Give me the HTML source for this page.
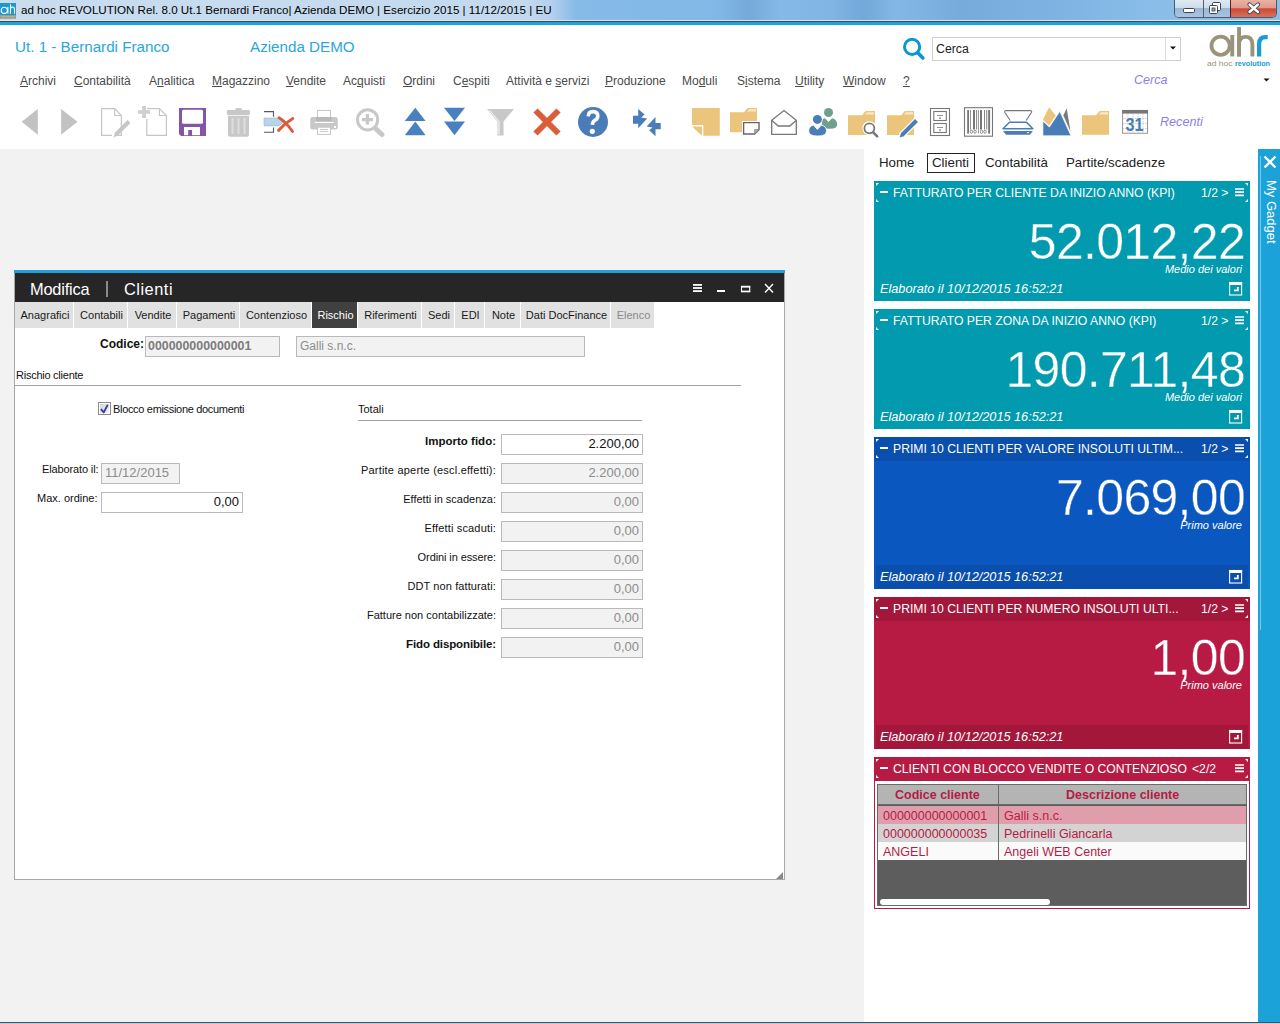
<!DOCTYPE html>
<html><head><meta charset="utf-8">
<style>
*{margin:0;padding:0;box-sizing:border-box}
html,body{width:1280px;height:1024px;overflow:hidden;background:#fff;font-family:"Liberation Sans",sans-serif;position:relative}
.a{position:absolute;white-space:nowrap}
#title{left:0;top:0;width:1280px;height:20px;background:linear-gradient(90deg,#c9ddef 0%,#c3d9ee 41%,#b5d1ee 43%,#86bbe8 45%,#82b8e7 56%,#74a9da 58.5%,#85b9e7 61%,#80b5e4 65%,#72a8da 67.5%,#83b8e6 70%,#76abdc 75%,#7db2e2 82%,#8abde8 90%,#8dbee7 100%)}
#title .t{left:21px;top:3px;font-size:11.6px;color:#000}
#tline1{left:0;top:20px;width:1280px;height:1px;background:#dfe9f4}
#tline2{left:0;top:21px;width:1280px;height:1px;background:#3f454c}
#tline3{left:0;top:22px;width:1280px;height:3px;background:#1ca4dc}
.hdr{font-size:15.2px;color:#2aa6df;margin-top:1px}
.menu{font-size:12px;color:#4a4a4a;top:74px}
.menu u{text-decoration:underline;text-underline-offset:1px;text-decoration-thickness:1px}
#gray{left:0;top:149px;width:864px;height:873px;background:#f2f2f2}
#rp{left:864px;top:149px;width:394px;height:873px;background:#fff}
#side{left:1258px;top:149px;width:22px;height:873px;background:#1ba3d9}
#task{left:0;top:1022px;width:1280px;height:2px;background:#b9cde0;border-top:1px solid #46515c}
#win{left:14px;top:270px;width:771px;height:610px;background:#fff;border:1px solid #a8a8a8}
#wtop{left:14px;top:270px;width:771px;height:3px;background:#1ba3d9}
#whdr{left:15px;top:273px;width:769px;height:29px;background:#262626}
.tab{top:302px;height:26px;background:#e1e1e1;font-size:11px;color:#1a1a1a;padding-top:7px;padding-left:2px;text-align:center}
.lbl{font-size:11px;color:#111}
.fld{height:21px;border:1px solid #b9b9b9;background:#f2f2f2;font-size:13px;color:#8c8c8c;text-align:right;padding:1px 3px 0 0}
.g{left:874px;width:376px}
.gt{font-size:12.2px;color:#fff}
.big{font-size:50px;color:#fff;text-align:right;right:35px;letter-spacing:-0.7px}
.it{font-style:italic;color:#fff}
</style></head><body>
<div id="title" class="a"><div class="a t">ad hoc REVOLUTION Rel. 8.0 Ut.1 Bernardi Franco| Azienda DEMO | Esercizio 2015 | 11/12/2015 | EU</div></div>

<div class="a" style="left:1174px;top:0;width:103px;height:18px;border:1px solid #4d5a68;border-top:none;border-radius:0 0 5px 5px;overflow:hidden;background:#aac4de">
 <div class="a" style="left:0;top:0;width:28px;height:17px;background:linear-gradient(180deg,#dfe9f4 0%,#cddcec 45%,#9ab8d6 50%,#a9c4df 100%)"></div>
 <div class="a" style="left:28px;top:0;width:1px;height:17px;background:#55606c"></div>
 <div class="a" style="left:29px;top:0;width:26px;height:17px;background:linear-gradient(180deg,#dfe9f4 0%,#cddcec 45%,#9ab8d6 50%,#a9c4df 100%)"></div>
 <div class="a" style="left:55px;top:0;width:1px;height:17px;background:#5a2020"></div>
 <div class="a" style="left:56px;top:0;width:46px;height:17px;background:linear-gradient(180deg,#eab2a6 0%,#e29a8a 45%,#cc4a3a 52%,#d9705a 100%)"></div>
</div>
<svg class="a" style="left:1174px;top:0" width="106" height="20" viewBox="1174 0 106 20">
<rect x="1183.5" y="8.5" width="11" height="4" rx="1" fill="#fff" stroke="#3a4450" stroke-width="1"/>
<rect x="1212.5" y="2.5" width="8" height="8" rx="1" fill="#fff" stroke="#3a4450" stroke-width="1"/>
<rect x="1209.5" y="5.5" width="8" height="8" rx="1" fill="#fff" stroke="#3a4450" stroke-width="1"/>
<rect x="1212" y="8" width="3" height="3" fill="#8fb0b0" stroke="#3a4450" stroke-width="0.8"/>
<path d="M1249.5 4.5 L1258 12 M1258 4.5 L1249.5 12" stroke="#3a4450" stroke-width="4.2" stroke-linecap="round"/>
<path d="M1249.5 4.5 L1258 12 M1258 4.5 L1249.5 12" stroke="#fff" stroke-width="2.4" stroke-linecap="round"/>
</svg>
<svg class="a" style="left:0;top:0" width="17" height="20" viewBox="0 0 17 20">
<rect x="0" y="3" width="16" height="12" fill="#1a98d0"/>
<rect x="0" y="15" width="16" height="3.8" fill="#a39b80"/>
<rect x="1" y="16.3" width="14" height="1" fill="#c8c4b4" opacity="0.7"/>
<circle cx="4.3" cy="10.3" r="3.1" fill="none" stroke="#fff" stroke-width="1.1"/>
<path d="M7.9 7 V13.6 M10.5 4.2 V13.7 M10.5 9.5 Q10.5 7 12.5 7 Q14.5 7 14.5 9.5 V13.7" fill="none" stroke="#fff" stroke-width="1.1"/>
</svg>
<!-- search -->
<svg class="a" style="left:900px;top:36px" width="30" height="28" viewBox="900 36 30 28">
<circle cx="912.1" cy="46.9" r="7.6" fill="none" stroke="#0997d3" stroke-width="3"/>
<path d="M917.8 52.8 L922.9 58" stroke="#0997d3" stroke-width="3.6" stroke-linecap="round"/>
</svg>
<div class="a" style="left:932px;top:37px;width:249px;height:24px;border:1px solid #cfcfcf;background:#fff"></div>
<div class="a" style="left:1165px;top:38px;width:1px;height:22px;background:#dcdcdc"></div>
<svg class="a" style="left:1168px;top:44px" width="10" height="8"><path d="M2 2.5 H8 L5 5.5 Z" fill="#111"/></svg>
<div class="a" style="left:936px;top:42px;font-size:12.3px;color:#222">Cerca</div>
<!-- logo -->
<svg class="a" style="left:1200px;top:24px" width="80" height="46" viewBox="1200 24 80 46">
<circle cx="1220.6" cy="45.7" r="9.1" fill="none" stroke="#9a937a" stroke-width="3.8"/>
<rect x="1230.3" y="35" width="3.9" height="21.4" fill="#9a937a"/>
<rect x="1237.1" y="27" width="3.9" height="29.4" fill="#9a937a"/>
<path d="M1239 56.4 V44.5 Q1239 36.9 1245.7 36.9 Q1252.4 36.9 1252.4 44.5 V56.4" fill="none" stroke="#9a937a" stroke-width="3.9"/>
<path d="M1259.1 56.4 V44 Q1259.1 37.2 1265.5 37.2 H1267.7" fill="none" stroke="#1a9ad6" stroke-width="4.2"/>
<text x="1207" y="66" font-family="Liberation Sans" font-size="7.4" fill="#9a937a" textLength="25.5" lengthAdjust="spacingAndGlyphs">ad hoc</text>
<text x="1235" y="66" font-family="Liberation Sans" font-weight="bold" font-size="7.4" fill="#1a9ad6" textLength="35" lengthAdjust="spacingAndGlyphs">revolution</text>
</svg>
<div class="a" style="left:1134px;top:73px;font-size:12.5px;font-style:italic;color:#8c7fe6">Cerca</div>
<svg class="a" style="left:1262px;top:76px" width="10" height="8"><path d="M1.5 2.5 H7.5 L4.5 5.5 Z" fill="#111"/></svg>
<div id="tline1" class="a"></div><div id="tline2" class="a"></div><div id="tline3" class="a"></div>

<div class="a hdr" style="left:15px;top:37px">Ut. 1 - Bernardi Franco</div>
<div class="a hdr" style="left:250px;top:37px">Azienda DEMO</div>

<div class="a menu" style="left:20px"><u>A</u>rchivi</div>
<div class="a menu" style="left:74px"><u>C</u>ontabilità</div>
<div class="a menu" style="left:149px">A<u>n</u>alitica</div>
<div class="a menu" style="left:212px"><u>M</u>agazzino</div>
<div class="a menu" style="left:286px"><u>V</u>endite</div>
<div class="a menu" style="left:343px">Ac<u>q</u>uisti</div>
<div class="a menu" style="left:403px"><u>O</u>rdini</div>
<div class="a menu" style="left:453px">C<u>e</u>spiti</div>
<div class="a menu" style="left:506px">Attività e <u>s</u>ervizi</div>
<div class="a menu" style="left:605px"><u>P</u>roduzione</div>
<div class="a menu" style="left:682px">Mo<u>d</u>uli</div>
<div class="a menu" style="left:737px">S<u>i</u>stema</div>
<div class="a menu" style="left:795px"><u>U</u>tility</div>
<div class="a menu" style="left:843px"><u>W</u>indow</div>
<div class="a menu" style="left:903px"><u>?</u></div>

<svg class="a" style="left:0;top:100px" width="1280" height="45" viewBox="0 100 1280 45">
<!-- nav -->
<path d="M21.7 121.8 L37.8 109 L37.8 134.7 Z" fill="#c2c2c2"/>
<path d="M61.1 109 L77.5 121.8 L61.1 134.7 Z" fill="#c2c2c2"/>
<!-- doc edit -->
<path d="M121.3 127 V115.5 L114.7 108.6 H101.6 V135.3 H112" fill="none" stroke="#c6c6c6" stroke-width="1.2"/>
<path d="M114.7 108.6 V115.5 H121.3" fill="none" stroke="#c6c6c6" stroke-width="1.2"/>
<path d="M116 134.5 L129 121.5" stroke="#c6c6c6" stroke-width="4"/>
<path d="M113.4 137.6 L115 132.8 L117.8 135.6 Z" fill="#c6c6c6"/>
<path d="M118 132.5 L121.3 132.5 V135.3 H118" fill="none" stroke="#c6c6c6" stroke-width="1.2"/>
<!-- new doc -->
<path d="M146.8 119 V135.3 H166.4 V115.5 L159.5 108.6 H147.2" fill="none" stroke="#c6c6c6" stroke-width="1.2"/>
<path d="M159.5 108.6 V115.5 H166.4" fill="none" stroke="#c6c6c6" stroke-width="1.2"/>
<rect x="138" y="110.2" width="12" height="3.6" fill="#cfcfcf"/>
<rect x="142.2" y="106" width="3.7" height="12" fill="#cfcfcf"/>
<!-- save -->
<path d="M179 108 H206 V136 H181 L179 134 Z" fill="#8256ab"/>
<rect x="182" y="109.8" width="21" height="14" rx="1.5" fill="#fff"/>
<rect x="184" y="127" width="16" height="8.2" fill="#fff"/>
<rect x="188.2" y="130" width="3.8" height="6" fill="#8256ab"/>
<!-- trash -->
<rect x="226.9" y="110" width="23" height="5" rx="1" fill="#c8c8c8"/>
<rect x="235.2" y="108" width="6.8" height="3" rx="1.5" fill="#c8c8c8"/>
<path d="M228 115.8 H249 V134.7 Q249 136.7 247 136.7 H230 Q228 136.7 228 134.7 Z" fill="#c8c8c8"/>
<g fill="#dedede"><rect x="231.5" y="118" width="2" height="16"/><rect x="237.5" y="118" width="2" height="16"/><rect x="243.5" y="118" width="2" height="16"/></g>
<!-- delete row -->
<path d="M264 111.6 H273.5 V116.7 M273.5 127.4 V132.3 H264" fill="none" stroke="#585858" stroke-width="1.1"/>
<path d="M264 118 H279 L283 122 L279 125.9 H264 Z" fill="#b9d3ea" stroke="#9cbad6" stroke-width="0.6"/>
<path d="M279 117.8 Q286 122 292.5 131.5 M278.5 130.5 Q285 123 292.8 118.5" stroke="#dc5a37" stroke-width="2.8" fill="none" stroke-linecap="round"/>
<!-- printer -->
<rect x="310.2" y="117" width="27.6" height="12.6" rx="2.5" fill="#c8c8c8"/>
<rect x="317.5" y="110.5" width="13" height="7" fill="#fff" stroke="#c8c8c8" stroke-width="1"/>
<rect x="316" y="117" width="15.7" height="4.8" fill="#b8b8b8"/>
<rect x="314.8" y="121.8" width="18.7" height="1.2" fill="#fff"/>
<rect x="317.5" y="127.2" width="13" height="7.3" fill="#fff" stroke="#c8c8c8" stroke-width="1"/>
<rect x="320" y="129" width="8" height="0.9" fill="#c0c0c0"/><rect x="320" y="131.2" width="8" height="0.9" fill="#c0c0c0"/>
<rect x="334" y="126" width="2" height="2" fill="#fff"/>
<!-- zoom -->
<circle cx="367.6" cy="119.8" r="10.1" fill="none" stroke="#c8c8c8" stroke-width="3"/>
<rect x="362" y="118" width="11" height="3.2" fill="#c8c8c8"/><rect x="365.8" y="114" width="3.3" height="10.7" fill="#c8c8c8"/>
<path d="M375.5 128.5 L382 134.5" stroke="#c8c8c8" stroke-width="5" stroke-linecap="round"/>
<!-- up/down -->
<g fill="#4a80bf">
<path d="M415.3 107.8 L425.6 121 H404.8 Z"/><path d="M415.3 121.6 L425.6 135.2 H404.8 Z"/>
<path d="M444 107.8 H465 L454.5 121 Z"/><path d="M444 121.6 H465 L454.5 135.2 Z"/>
</g>
<!-- filter -->
<path d="M487 109 H514 L503.5 121.5 V135.6 H497.5 V121.5 Z" fill="#c8c8c8"/>
<path d="M489.5 110.3 L499 121.5 V134.5" stroke="#fff" stroke-width="1" fill="none"/>
<!-- red x -->
<path d="M535.5 110.5 L558.5 133.5 M558.5 110.5 L535.5 133.5" stroke="#dc5d3b" stroke-width="6"/>
<!-- help -->
<circle cx="593" cy="122" r="15" fill="#4a7db8"/>
<path d="M588.2 116.4 Q588.5 111.6 593 111.6 Q597.8 111.6 597.8 116 Q597.8 118.6 595 120.3 Q592.5 121.8 592.3 124.8" fill="none" stroke="#fff" stroke-width="3.6"/>
<circle cx="592.3" cy="131.3" r="2.6" fill="#fff"/>
<!-- exchange -->
<path d="M633 115.8 H638.2 V109.1 L644.6 114.6 L641.2 117.4 L647.2 118.5 L638.2 128.3 V123.8 H633 Z" fill="#4a7db8"/>
<path d="M660.7 123 H655.5 V117.1 L646.6 126.5 L652.5 127.5 L649.2 130.3 L655.5 136.3 V129.2 H660.7 Z" fill="#4a7db8"/>
<!-- sticky -->
<path d="M692 108 H719.8 V135.8 H703.3 V125 H692 Z" fill="#ebc57c"/>
<path d="M692 126.4 H702 V135.8 Z" fill="#ebc57c"/>
<!-- folder+doc -->
<path d="M730 112.2 H744 L747.5 108 H757 V132.3 H730 Z" fill="#ebc57c"/>
<path d="M747 111.5 L749 109.2 H756 V111.5 Z" fill="#fff" opacity="0.6"/>
<rect x="742" y="121" width="18.7" height="14.8" fill="#fff"/>
<path d="M743.6 122.6 H759 V129.6 L754.6 134 H743.6 Z" fill="#fff" stroke="#666" stroke-width="1.4"/>
<path d="M754.6 134 V129.6 H759" fill="#aaa" stroke="#888" stroke-width="0.8"/>
<!-- envelope -->
<path d="M771.7 120.3 L784 110.5 L796.3 120.3 V134.3 H771.7 Z" fill="none" stroke="#777" stroke-width="1.3"/>
<path d="M771.7 120.3 L778.2 126 H789.8 L796.3 120.3" fill="none" stroke="#777" stroke-width="1.3"/>
<!-- users -->
<circle cx="828.5" cy="112.5" r="4.5" fill="#6fa08c"/>
<path d="M822 119.5 Q823 118.5 825 118.3 L828.5 122 L832 118.3 Q837.2 119.5 837.2 124.5 Q837.2 128.7 830 128.7 Q822 128.7 822 124 Z" fill="#6fa08c"/>
<circle cx="817.4" cy="119.4" r="5.3" fill="#fff"/>
<circle cx="817.4" cy="119.4" r="4.5" fill="#4a7db8"/>
<path d="M808.7 131 Q808.7 126.2 813.5 125.2 L817.4 129.5 L821.3 125.2 Q826.5 126 826.5 131 Q826.5 136 817.6 136 Q808.7 136 808.7 131 Z" fill="#4a7db8" stroke="#fff" stroke-width="0.8"/>
<!-- folder+magnifier -->
<path d="M848 115.2 H862 L865.5 111 H875 V135 H848 Z" fill="#ebc57c"/>
<path d="M865 114.5 L867 112.2 H874 V114.5 Z" fill="#fff" opacity="0.6"/>
<circle cx="869.4" cy="128.3" r="7" fill="#fff"/>
<path d="M873.5 132.5 L878.5 137.5" stroke="#fff" stroke-width="4"/>
<circle cx="869.4" cy="128.3" r="5" fill="#fff" stroke="#777" stroke-width="1.8"/>
<path d="M873.2 132.3 L877.2 136.3" stroke="#777" stroke-width="2.6" stroke-linecap="round"/>
<!-- folder+pencil -->
<path d="M887 115.2 H901.3 L904.8 111 H914 V135 H887 Z" fill="#ebc57c"/>
<path d="M904 114.5 L906 112.2 H913 V114.5 Z" fill="#fff" opacity="0.6"/>
<path d="M901 136 L916.5 120.5" stroke="#fff" stroke-width="6.5"/>
<path d="M902 135 L916.5 120.5" stroke="#4a7db8" stroke-width="4"/>
<path d="M899.5 137.6 L901.2 132.8 L904.3 135.9 Z" fill="#4a7db8"/>
<!-- cabinet -->
<g fill="none" stroke="#777" stroke-width="1.1">
<rect x="930.5" y="108.5" width="19" height="27"/>
<rect x="933.8" y="111.5" width="12.5" height="9"/>
<rect x="933.8" y="123.5" width="12.5" height="9"/>
</g>
<rect x="937" y="115" width="6" height="0.8" fill="#777"/><rect x="939.3" y="117.4" width="1.5" height="1.5" fill="#777"/>
<rect x="937" y="127" width="6" height="0.8" fill="#777"/><rect x="939.3" y="129.4" width="1.5" height="1.5" fill="#777"/>
<!-- barcode -->
<rect x="964.5" y="107.7" width="28" height="28.5" fill="none" stroke="#777" stroke-width="1.1"/>
<g fill="#777">
<rect x="967.2" y="110" width="1.8" height="23.6"/><rect x="970.2" y="110" width="0.8" height="19.5"/>
<rect x="973" y="110" width="2" height="19.5"/><rect x="976.2" y="110" width="0.9" height="19.5"/>
<rect x="978" y="110" width="0.7" height="23.6"/>
<rect x="980" y="110" width="2" height="19.5"/><rect x="984" y="110" width="0.9" height="19.5"/>
<rect x="986.3" y="110" width="0.9" height="19.5"/><rect x="988.2" y="110" width="1.9" height="23.6"/>
</g>
<g fill="none" stroke="#777" stroke-width="0.8">
<ellipse cx="971.5" cy="131.7" rx="1.2" ry="1.6"/><ellipse cx="975" cy="131.7" rx="1.2" ry="1.6"/>
<ellipse cx="981.5" cy="131.7" rx="1.2" ry="1.6"/><ellipse cx="985" cy="131.7" rx="1.2" ry="1.6"/>
</g>
<!-- scanner -->
<path d="M1010.2 120.5 L1004.8 112.2 Q1004.3 110.6 1006 110.6 H1030.5 Q1032 110.6 1031.5 112.2 L1026.2 120.5" fill="none" stroke="#777" stroke-width="1.1"/>
<path d="M1009.5 122.3 H1026.5 L1032.8 128.7 H1003 Z" fill="#fff" stroke="#4a7db8" stroke-width="1.6" stroke-linejoin="round"/>
<path d="M1003 131 H1032.8 L1030 134.8 H1006 Z" fill="#4a7db8"/>
<rect x="1027" y="132.2" width="2" height="0.9" fill="#fff"/>
<!-- mountains -->
<path d="M1042.9 119.8 L1049.1 107.3 L1055.8 115.4 L1049.1 125.6 Z" fill="#ebc57c"/>
<path d="M1063.4 115.4 L1066.7 108.2 L1070.5 131.4 Z" fill="#7a7a7a"/>
<path d="M1042.9 121.1 L1049.4 127 L1059.8 111.3 L1071 135.8 H1042.9 Z" fill="#4a7db8" stroke="#fff" stroke-width="0.7"/>
<!-- folder -->
<path d="M1082 115.2 H1096 L1099.5 111 H1109 V134.8 H1082 Z" fill="#ebc57c"/>
<path d="M1099 114.5 L1101 112.2 H1108 V114.5 Z" fill="#fff" opacity="0.6"/>
<!-- calendar -->
<rect x="1122.6" y="110.4" width="25" height="22.8" fill="#fff" stroke="#888" stroke-width="0.9"/>
<rect x="1122.2" y="110" width="25.8" height="3.6" fill="#777"/>
<g stroke="#bbb" stroke-width="0.7" stroke-dasharray="1.5 1">
<path d="M1122.6 118.5 H1147.6 M1122.6 123.5 H1147.6 M1122.6 128.5 H1147.6 M1127.8 113.6 V133 M1133 113.6 V133 M1138 113.6 V133 M1143 113.6 V133"/>
</g>
<text x="1134.6" y="131" font-family="Liberation Sans" font-weight="bold" font-size="17.5" fill="#4a7db8" text-anchor="middle" textLength="18" lengthAdjust="spacingAndGlyphs">31</text>
</svg>
<div class="a" style="left:1160px;top:115px;font-size:12.6px;font-style:italic;color:#8c7fe6">Recenti</div>
<div id="gray" class="a"></div>
<div id="rp" class="a"></div>
<div id="side" class="a"></div>
<div id="task" class="a"></div>


<div class="a" style="left:879px;top:155px;font-size:13.3px;color:#222">Home</div>
<div class="a" style="left:927px;top:153px;width:48px;height:20px;border:1px solid #222"></div>
<div class="a" style="left:932px;top:155px;font-size:13.3px;color:#222">Clienti</div>
<div class="a" style="left:985px;top:155px;font-size:13.3px;color:#222">Contabilità</div>
<div class="a" style="left:1066px;top:155px;font-size:13.3px;color:#222">Partite/scadenze</div>
<div class="a" style="left:1260px;top:156px;width:1px;height:474px;background:#7ccaeb"></div>
<svg class="a" style="left:1262px;top:154px" width="16" height="16"><path d="M2.5 2.5 L13.5 13.5 M13.5 2.5 L2.5 13.5" stroke="#fff" stroke-width="2.4"/></svg>
<div class="a" style="left:1278.5px;top:180px;font-size:13px;color:#fff;transform-origin:0 0;transform:rotate(90deg)">My Gadget</div>
<div class="a" style="left:874px;top:181px;width:376px;height:120px;background:#019aae"></div>
<svg class="a" style="left:874px;top:181px" width="376" height="22" viewBox="0 0 376 22">
<path d="M2 2 H5 L2 5 Z M2 21 H5 L2 18 Z M374 2 H371 L374 5 Z M374 21 H371 L374 18 Z" fill="#fff"/>
<rect x="6" y="10" width="8" height="2" fill="#fff"/>
<path d="M361 8 H370 M361 11.2 H370 M361 14.4 H370" stroke="#fff" stroke-width="1.7"/>
</svg><div class="a gt" style="left:893px;top:186px">FATTURATO PER CLIENTE DA INIZIO ANNO (KPI)</div>
<div class="a gt" style="left:1201px;top:186px">1/2 &gt;</div>
<div class="a big" style="top:213px;-webkit-text-stroke:0.4px #019aae">52.012,22</div>
<div class="a it" style="right:38px;top:263px;font-size:11px">Medio dei valori</div>
<div class="a it" style="left:880px;top:281.5px;font-size:12.7px">Elaborato il 10/12/2015 16:52:21</div>
<svg class="a" style="left:1228px;top:280px" width="16" height="16" viewBox="0 0 16 16">
<rect x="1.6" y="2.5" width="12" height="12.5" fill="none" stroke="#fff" stroke-width="1.1"/>
<rect x="1" y="2" width="13.1" height="3" fill="#fff"/>
<path d="M6 10.4 H9.8 V6.9" fill="none" stroke="#fff" stroke-width="1.8"/>
</svg><div class="a" style="left:874px;top:309px;width:376px;height:120px;background:#019aae"></div>
<svg class="a" style="left:874px;top:309px" width="376" height="22" viewBox="0 0 376 22">
<path d="M2 2 H5 L2 5 Z M2 21 H5 L2 18 Z M374 2 H371 L374 5 Z M374 21 H371 L374 18 Z" fill="#fff"/>
<rect x="6" y="10" width="8" height="2" fill="#fff"/>
<path d="M361 8 H370 M361 11.2 H370 M361 14.4 H370" stroke="#fff" stroke-width="1.7"/>
</svg><div class="a gt" style="left:893px;top:314px">FATTURATO PER ZONA DA INIZIO ANNO (KPI)</div>
<div class="a gt" style="left:1201px;top:314px">1/2 &gt;</div>
<div class="a big" style="top:341px;-webkit-text-stroke:0.4px #019aae">190.711,48</div>
<div class="a it" style="right:38px;top:391px;font-size:11px">Medio dei valori</div>
<div class="a it" style="left:880px;top:409.5px;font-size:12.7px">Elaborato il 10/12/2015 16:52:21</div>
<svg class="a" style="left:1228px;top:408px" width="16" height="16" viewBox="0 0 16 16">
<rect x="1.6" y="2.5" width="12" height="12.5" fill="none" stroke="#fff" stroke-width="1.1"/>
<rect x="1" y="2" width="13.1" height="3" fill="#fff"/>
<path d="M6 10.4 H9.8 V6.9" fill="none" stroke="#fff" stroke-width="1.8"/>
</svg><div class="a" style="left:874px;top:437px;width:376px;height:152px;background:#0b57c0"></div>
<div class="a" style="left:874px;top:437px;width:376px;height:24px;background:#0a4fae"></div>
<div class="a" style="left:876px;top:565px;width:372px;height:24px;background:#0a4fae"></div>
<svg class="a" style="left:874px;top:437px" width="376" height="22" viewBox="0 0 376 22">
<path d="M2 2 H5 L2 5 Z M2 21 H5 L2 18 Z M374 2 H371 L374 5 Z M374 21 H371 L374 18 Z" fill="#fff"/>
<rect x="6" y="10" width="8" height="2" fill="#fff"/>
<path d="M361 8 H370 M361 11.2 H370 M361 14.4 H370" stroke="#fff" stroke-width="1.7"/>
</svg><div class="a gt" style="left:893px;top:442px">PRIMI 10 CLIENTI PER VALORE INSOLUTI ULTIM...</div>
<div class="a gt" style="left:1201px;top:442px">1/2 &gt;</div>
<div class="a big" style="top:469px;-webkit-text-stroke:0.4px #0b57c0">7.069,00</div>
<div class="a it" style="right:38px;top:519px;font-size:11px">Primo valore</div>
<div class="a it" style="left:880px;top:569.5px;font-size:12.7px">Elaborato il 10/12/2015 16:52:21</div>
<svg class="a" style="left:1228px;top:568px" width="16" height="16" viewBox="0 0 16 16">
<rect x="1.6" y="2.5" width="12" height="12.5" fill="none" stroke="#fff" stroke-width="1.1"/>
<rect x="1" y="2" width="13.1" height="3" fill="#fff"/>
<path d="M6 10.4 H9.8 V6.9" fill="none" stroke="#fff" stroke-width="1.8"/>
</svg><div class="a" style="left:874px;top:597px;width:376px;height:152px;background:#b71b44"></div>
<div class="a" style="left:874px;top:597px;width:376px;height:24px;background:#a3173b"></div>
<div class="a" style="left:876px;top:725px;width:372px;height:24px;background:#a3173b"></div>
<svg class="a" style="left:874px;top:597px" width="376" height="22" viewBox="0 0 376 22">
<path d="M2 2 H5 L2 5 Z M2 21 H5 L2 18 Z M374 2 H371 L374 5 Z M374 21 H371 L374 18 Z" fill="#fff"/>
<rect x="6" y="10" width="8" height="2" fill="#fff"/>
<path d="M361 8 H370 M361 11.2 H370 M361 14.4 H370" stroke="#fff" stroke-width="1.7"/>
</svg><div class="a gt" style="left:893px;top:602px">PRIMI 10 CLIENTI PER NUMERO INSOLUTI ULTI...</div>
<div class="a gt" style="left:1201px;top:602px">1/2 &gt;</div>
<div class="a big" style="top:629px;-webkit-text-stroke:0.4px #b71b44">1,00</div>
<div class="a it" style="right:38px;top:679px;font-size:11px">Primo valore</div>
<div class="a it" style="left:880px;top:729.5px;font-size:12.7px">Elaborato il 10/12/2015 16:52:21</div>
<svg class="a" style="left:1228px;top:728px" width="16" height="16" viewBox="0 0 16 16">
<rect x="1.6" y="2.5" width="12" height="12.5" fill="none" stroke="#fff" stroke-width="1.1"/>
<rect x="1" y="2" width="13.1" height="3" fill="#fff"/>
<path d="M6 10.4 H9.8 V6.9" fill="none" stroke="#fff" stroke-width="1.8"/>
</svg><div class="a" style="left:874px;top:757px;width:376px;height:152px;background:#fff;border:1px solid #b71b44"></div>
<div class="a" style="left:874px;top:757px;width:376px;height:24px;background:#b71b44"></div>
<svg class="a" style="left:874px;top:757px" width="376" height="22" viewBox="0 0 376 22">
<path d="M2 2 H5 L2 5 Z M2 21 H5 L2 18 Z M374 2 H371 L374 5 Z M374 21 H371 L374 18 Z" fill="#fff"/>
<rect x="6" y="10" width="8" height="2" fill="#fff"/>
<path d="M361 8 H370 M361 11.2 H370 M361 14.4 H370" stroke="#fff" stroke-width="1.7"/>
</svg>
<div class="a gt" style="left:893px;top:762px">CLIENTI CON BLOCCO VENDITE O CONTENZIOSO</div>
<div class="a gt" style="left:1192px;top:762px">&lt;2/2</div>
<div class="a" style="left:877px;top:784px;width:370px;height:122px;background:#5d5d5d;border:1px solid #6a6a6a"></div>
<div class="a" style="left:878px;top:785px;width:368px;height:20px;background:#b4b4b4;border-bottom:1px solid #6a6a6a"></div>
<div class="a" style="left:878px;top:806px;width:368px;height:18px;background:#e09eac"></div>
<div class="a" style="left:878px;top:824px;width:368px;height:18px;background:#d3d3d3"></div>
<div class="a" style="left:878px;top:842px;width:368px;height:18px;background:#fafafa"></div>
<div class="a" style="left:998px;top:785px;width:1px;height:75px;background:#6a6a6a"></div>
<div class="a" style="left:880px;top:899px;width:170px;height:6px;border-radius:3px;background:#fff"></div>
<div class="a" style="left:895px;top:788px;font-size:12.5px;font-weight:bold;color:#b71b44">Codice cliente</div>
<div class="a" style="left:1066px;top:788px;font-size:12.5px;font-weight:bold;color:#b71b44">Descrizione cliente</div>
<div class="a" style="left:883px;top:809px;font-size:12.5px;color:#b71b44">000000000000001</div>
<div class="a" style="left:883px;top:827px;font-size:12.5px;color:#b71b44">000000000000035</div>
<div class="a" style="left:883px;top:845px;font-size:12.5px;color:#b71b44">ANGELI</div>
<div class="a" style="left:1004px;top:809px;font-size:12.5px;color:#b71b44">Galli s.n.c.</div>
<div class="a" style="left:1004px;top:827px;font-size:12.5px;color:#b71b44">Pedrinelli Giancarla</div>
<div class="a" style="left:1004px;top:845px;font-size:12.5px;color:#b71b44">Angeli WEB Center</div>
<!--WINDOW-->
<div id="win" class="a"></div>
<div id="wtop" class="a"></div>
<div id="whdr" class="a"></div>

<div class="a" style="left:30px;top:280px;font-size:16.4px;letter-spacing:-0.2px;color:#fff">Modifica</div>
<div class="a" style="left:106px;top:281px;width:2px;height:16px;background:#8a8a8a"></div>
<div class="a" style="left:124px;top:280px;font-size:16.4px;letter-spacing:0.5px;color:#fff">Clienti</div>
<svg class="a" style="left:680px;top:278px" width="100" height="20" viewBox="680 278 100 20">
<g fill="#fff"><rect x="693" y="284" width="9" height="1.8"/><rect x="693" y="287.1" width="9" height="1.8"/><rect x="693" y="290.2" width="9" height="1.8"/>
<rect x="717" y="290" width="8" height="2"/>
<rect x="741.5" y="286.5" width="8.2" height="5.2" fill="none" stroke="#fff" stroke-width="1.1"/><rect x="741" y="285.8" width="9.2" height="1.8" fill="#fff"/><rect x="741" y="290.6" width="9.2" height="1.5" fill="#fff"/></g>
<path d="M765 284 L773 292.5 M773 284 L765 292.5" stroke="#fff" stroke-width="1.4"/>
</svg>
<div class="a tab" style="left:15px;width:58px;">Anagrafici</div>
<div class="a tab" style="left:74px;width:53px;">Contabili</div>
<div class="a tab" style="left:128px;width:48px;">Vendite</div>
<div class="a tab" style="left:177px;width:62px;">Pagamenti</div>
<div class="a tab" style="left:240px;width:71px;">Contenzioso</div>
<div class="a tab" style="left:312px;width:45px;background:#404040;color:#fff;">Rischio</div>
<div class="a tab" style="left:358px;width:63px;">Riferimenti</div>
<div class="a tab" style="left:422px;width:32px;">Sedi</div>
<div class="a tab" style="left:455px;width:29px;">EDI</div>
<div class="a tab" style="left:485px;width:35px;">Note</div>
<div class="a tab" style="left:521px;width:89px;">Dati DocFinance</div>
<div class="a tab" style="left:611px;width:43px;color:#8a8a8a;">Elenco</div>

<div class="a lbl" style="left:100px;top:337px;font-weight:bold;font-size:12px">Codice:</div>
<div class="a fld" style="left:145px;top:336px;width:135px;text-align:left;padding-left:2px;padding-top:2px;font-weight:bold;font-size:12.4px;color:#7c7c7c">000000000000001</div>
<div class="a fld" style="left:296px;top:336px;width:289px;text-align:left;padding-left:3px;padding-top:2px;font-size:12px">Galli s.n.c.</div>
<div class="a lbl" style="letter-spacing:-0.25px;left:16px;top:369px">Rischio cliente</div>
<div class="a" style="left:15px;top:385px;width:726px;height:1px;background:#a0a0a0"></div>
<div class="a" style="left:98px;top:402px;width:13px;height:13px;border:1px solid #8a8a8a;background:#fff"></div>
<div class="a" style="left:100px;top:404px;width:9px;height:9px;background:linear-gradient(135deg,#cfd6da,#f4f4f4)"></div>
<svg class="a" style="left:98px;top:402px" width="13" height="13"><path d="M3.4 7.6 L5.8 10.4 L9.4 3.4" stroke="#3b3d9c" stroke-width="1.9" fill="none" stroke-linecap="round" stroke-linejoin="round"/></svg>
<div class="a lbl" style="letter-spacing:-0.32px;left:113px;top:403px">Blocco emissione documenti</div>
<div class="a lbl" style="left:358px;top:403px">Totali</div>
<div class="a" style="left:358px;top:420px;width:284px;height:1px;background:#a0a0a0"></div>
<div class="a lbl" style="letter-spacing:-0.13px;left:42px;top:463px">Elaborato il:</div>
<div class="a fld" style="left:101px;top:463px;width:79px;text-align:left;padding-left:3px">11/12/2015</div>
<div class="a lbl" style="left:37px;top:492px">Max. ordine:</div>
<div class="a fld" style="left:101px;top:492px;width:142px;background:#fff;color:#111">0,00</div>
<div class="a lbl" style="right:784px;top:435px;font-weight:bold;font-size:11.5px">Importo fido:</div>
<div class="a fld" style="left:501px;top:434px;width:142px;background:#fff;color:#111;">2.200,00</div>
<div class="a lbl" style="letter-spacing:0.21px;right:784px;top:464px;">Partite aperte (escl.effetti):</div>
<div class="a fld" style="left:501px;top:463px;width:142px;">2.200,00</div>
<div class="a lbl" style="right:784px;top:493px;">Effetti in scadenza:</div>
<div class="a fld" style="left:501px;top:492px;width:142px;">0,00</div>
<div class="a lbl" style="letter-spacing:0.17px;right:784px;top:522px;">Effetti scaduti:</div>
<div class="a fld" style="left:501px;top:521px;width:142px;">0,00</div>
<div class="a lbl" style="letter-spacing:-0.1px;right:784px;top:551px;">Ordini in essere:</div>
<div class="a fld" style="left:501px;top:550px;width:142px;">0,00</div>
<div class="a lbl" style="letter-spacing:0.11px;right:784px;top:580px;">DDT non fatturati:</div>
<div class="a fld" style="left:501px;top:579px;width:142px;">0,00</div>
<div class="a lbl" style="right:784px;top:609px;">Fatture non contabilizzate:</div>
<div class="a fld" style="left:501px;top:608px;width:142px;">0,00</div>
<div class="a lbl" style="letter-spacing:-0.12px;right:784px;top:638px;font-weight:bold;font-size:11.5px">Fido disponibile:</div>
<div class="a fld" style="left:501px;top:637px;width:142px;">0,00</div>
<svg class="a" style="left:774px;top:870px" width="10" height="10"><path d="M9 2 L9 9 L2 9 Z" fill="#8a8a8a"/></svg>
<!--GADGETS-->
</body></html>
